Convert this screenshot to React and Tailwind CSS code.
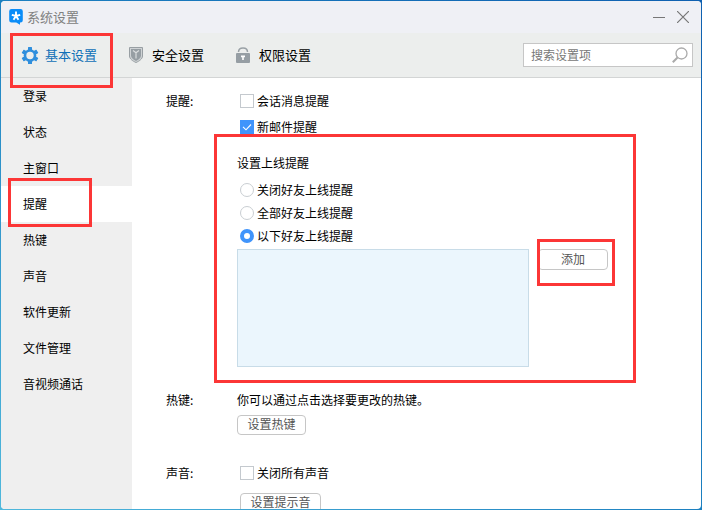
import { useState } from "react";

function Highlight({ className }) {
  return (
    <span
      aria-hidden="true"
      className={`pointer-events-none absolute z-10 border-3 border-[#fc3636] ${className}`}
    />
  );
}

function AppLogo() {
  return (
    <svg width="14" height="16" viewBox="0 0 14 16" aria-hidden="true">
      <path
        d="M2.500 0h9A2.300 2.300 0 0 1 13.800 2.300v8.900A2.300 2.300 0 0 1 11.500 13.500H11v2.300L7.200 13.500H2.500A2.300 2.300 0 0 1 .2 11.200V2.300A2.300 2.300 0 0 1 2.500 0z"
        fill="#0a8cf8"
      />
      <path
        d="M7 2.500V7M7 7L2.800 5.800M7 7l4.200-1.200M7 7l-2.500 3.800M7 7l2.500 3.800"
        stroke="#fff"
        strokeWidth="1.900"
        fill="none"
      />
    </svg>
  );
}

function GearIcon() {
  return (
    <svg width="18" height="18" viewBox="0 0 18 18" aria-hidden="true">
      <g fill="#2f8fdd">
        <rect x="7" y="1" width="4" height="17" rx=".5" />
        <rect x="7" y="1" width="4" height="17" rx=".5" transform="rotate(60 9 9.500)" />
        <rect x="7" y="1" width="4" height="17" rx=".5" transform="rotate(120 9 9.500)" />
        <circle cx="9" cy="9.500" r="6.300" />
      </g>
      <circle cx="9" cy="9.500" r="3.700" fill="#eceeed" />
    </svg>
  );
}

function ShieldIcon() {
  return (
    <svg width="18" height="18" viewBox="0 0 18 18" aria-hidden="true">
      <path d="M1.500 1.500h13v8.500c0 3-3.500 5.200-6.500 6.500c-3-1.300-6.500-3.500-6.500-6.500z" fill="#cfd3d5" stroke="#989fa3" />
      <path d="M3 3h10v6.800c0 2.300-2.700 4-5 5.100c-2.300-1.100-5-2.800-5-5.100z" fill="#969ea3" />
      <path d="M5 4.500L8 6.800l3-2.300M8 6.500v6" stroke="#d9dcdd" strokeWidth="1.200" fill="none" />
    </svg>
  );
}

function LockIcon() {
  return (
    <svg width="18" height="18" viewBox="0 0 18 18" aria-hidden="true">
      <path d="M3.500 6C3.500 .5 12.500 .5 12.500 6" fill="none" stroke="#9aa1a6" strokeWidth="1.500" />
      <rect x="1" y="7" width="14" height="10" rx="1" fill="#969ea4" />
      <path d="M6 9.500h4v1.800H8.800V14H7.200v-2.700H6z" fill="#fff" />
    </svg>
  );
}

function Checkbox({ children, defaultChecked = false }) {
  return (
    <label className="flex items-center gap-[3px]">
      <span className="grid size-3.5">
        <input
          type="checkbox"
          defaultChecked={defaultChecked}
          className="peer col-start-1 row-start-1 size-3.5 appearance-none border border-[#c4c9ce] bg-white checked:border-[#4094fb] checked:bg-[#4094fb]"
        />
        <svg
          viewBox="0 0 14 14"
          aria-hidden="true"
          className="pointer-events-none col-start-1 row-start-1 size-3.5 opacity-0 peer-checked:opacity-100"
        >
          <path d="M3 6.800l3 3l5-5.300" fill="none" stroke="#fff" strokeWidth="1.100" />
        </svg>
      </span>
      {children}
    </label>
  );
}

function Radio({ children, checked, onChange }) {
  return (
    <label className="flex items-center gap-[3px]">
      <input
        type="radio"
        name="online-reminder"
        checked={checked}
        onChange={onChange}
        className="size-3.5 appearance-none rounded-full border border-[#c9ced2] bg-white checked:border-4 checked:border-[#4094fb]"
      />
      {children}
    </label>
  );
}

function Button({ children, className = "" }) {
  return (
    <button
      type="button"
      className={`flex items-center justify-center rounded border border-[#c6c6c6] bg-white pb-0.5 leading-4 text-[#555] ${className}`}
    >
      {children}
    </button>
  );
}

function Section({ title, className = "", children }) {
  return (
    <section className={`flex ${className}`}>
      <h2 className="w-[71px] shrink-0">{title}</h2>
      <div className="min-w-0 flex-1">{children}</div>
    </section>
  );
}

const tabs = [
  { name: "基本设置", Icon: GearIcon },
  { name: "安全设置", Icon: ShieldIcon },
  { name: "权限设置", Icon: LockIcon },
];

const pages = ["登录", "状态", "主窗口", "提醒", "热键", "声音", "软件更新", "文件管理", "音视频通话"];

const reminders = ["关闭好友上线提醒", "全部好友上线提醒", "以下好友上线提醒"];

export default function App() {
  const [reminder, setReminder] = useState(reminders[2]);

  return (
    <div className="h-screen bg-linear-to-tr from-[#4fb8dc] via-[#1c80c0] to-[#0f60b0] p-px font-['Noto_Sans_CJK_SC',sans-serif] text-xs leading-4 text-black">
      <div className="flex h-full flex-col overflow-hidden rounded bg-white">
        <header className="flex h-8 shrink-0 items-center justify-between bg-[#eff0f5] pr-3 pl-2">
          <h1 className="flex items-center gap-1 text-[13px] text-[#808080]">
            <AppLogo />
            系统设置
          </h1>
          <div className="flex gap-3">
            <button type="button" aria-label="最小化">
              <svg width="12" height="12" viewBox="0 0 12 12" aria-hidden="true">
                <path d="M0 6.500h12" stroke="#777" />
              </svg>
            </button>
            <button type="button" aria-label="关闭">
              <svg width="12" height="12" viewBox="0 0 12 12" aria-hidden="true">
                <path d="M0 0l12 12M12 0L0 12" stroke="#777" strokeWidth="1.200" />
              </svg>
            </button>
          </div>
        </header>

        <div className="flex h-[45px] shrink-0 items-center justify-between border-b border-[#d3d5d5] bg-[#eceeed] pr-2 pl-5">
          <nav className="flex gap-[31px]">
            {tabs.map(({ name, Icon }, i) => (
              <button
                key={name}
                type="button"
                className={`relative flex items-center gap-1.5 text-[13px] ${i === 0 ? "text-[#0f70b7]" : ""}`}
              >
                <Icon />
                {name}
                {i === 0 && <Highlight className="-top-[13px] -right-4 -bottom-6 -left-[11px]" />}
              </button>
            ))}
          </nav>
          <div className="flex h-6 w-[170px] items-center border border-[#c6c6c6] bg-white pr-1 pl-[7px]">
            <input
              type="search"
              aria-label="搜索设置项"
              placeholder="搜索设置项"
              className="min-w-0 flex-1 text-[#555] outline-none placeholder:text-[#777]"
            />
            <svg width="16" height="16" viewBox="0 0 16 16" aria-hidden="true">
              <circle cx="9.500" cy="6.500" r="5.500" fill="none" stroke="#aaa" strokeWidth="1.300" />
              <path d="M5.500 10.500L.8 15.200" stroke="#aaa" strokeWidth="2" />
            </svg>
          </div>
        </div>

        <div className="flex min-h-0 flex-1">
          <nav className="w-[131px] shrink-0 bg-[#efefef]">
            {pages.map((name) => (
              <button
                key={name}
                type="button"
                className={`relative flex h-9 w-full items-center pl-[22px] ${name === "提醒" ? "bg-white" : ""}`}
              >
                {name}
                {name === "提醒" && <Highlight className="-top-2 right-10 -bottom-[5px] left-[7px]" />}
              </button>
            ))}
          </nav>

          <main className="min-w-0 flex-1 overflow-hidden pt-[15px] pl-[34px]">
            <Section title="提醒:">
              <div className="flex flex-col gap-2.5 pl-[3px]">
                <Checkbox>会话消息提醒</Checkbox>
                <Checkbox defaultChecked>新邮件提醒</Checkbox>
              </div>
              <div className="relative mt-5 w-[371px]">
                <fieldset>
                  <legend>设置上线提醒</legend>
                  <div className="mt-[11px] flex flex-col gap-[7px] pl-[3px]">
                    {reminders.map((name) => (
                      <Radio key={name} checked={reminder === name} onChange={() => setReminder(name)}>
                        {name}
                      </Radio>
                    ))}
                  </div>
                  <div className="mt-[5px] flex items-start gap-[9px]">
                    <textarea
                      readOnly
                      aria-label="好友列表"
                      className="block h-[118px] w-[292px] resize-none border border-[#c8dce8] bg-[#ebf6fd] outline-none"
                    />
                    <div className="relative flex-1">
                      <Button className="h-[21px] w-full">添加</Button>
                      <Highlight className="-top-2.5 -right-[7px] -bottom-4 -left-px" />
                    </div>
                  </div>
                </fieldset>
                <Highlight className="-top-[21px] -right-7 -bottom-4 -left-[23px]" />
              </div>
            </Section>

            <Section title="热键:" className="mt-[25px]">
              <p>你可以通过点击选择要更改的热键。</p>
              <Button className="mt-[7px] h-5 w-[69px]">设置热键</Button>
            </Section>

            <Section title="声音:" className="mt-[30px]">
              <div className="pl-[3px]">
                <Checkbox>关闭所有声音</Checkbox>
                <Button className="mt-3 h-5 w-[81px]">设置提示音</Button>
              </div>
            </Section>
          </main>
        </div>
      </div>
    </div>
  );
}
